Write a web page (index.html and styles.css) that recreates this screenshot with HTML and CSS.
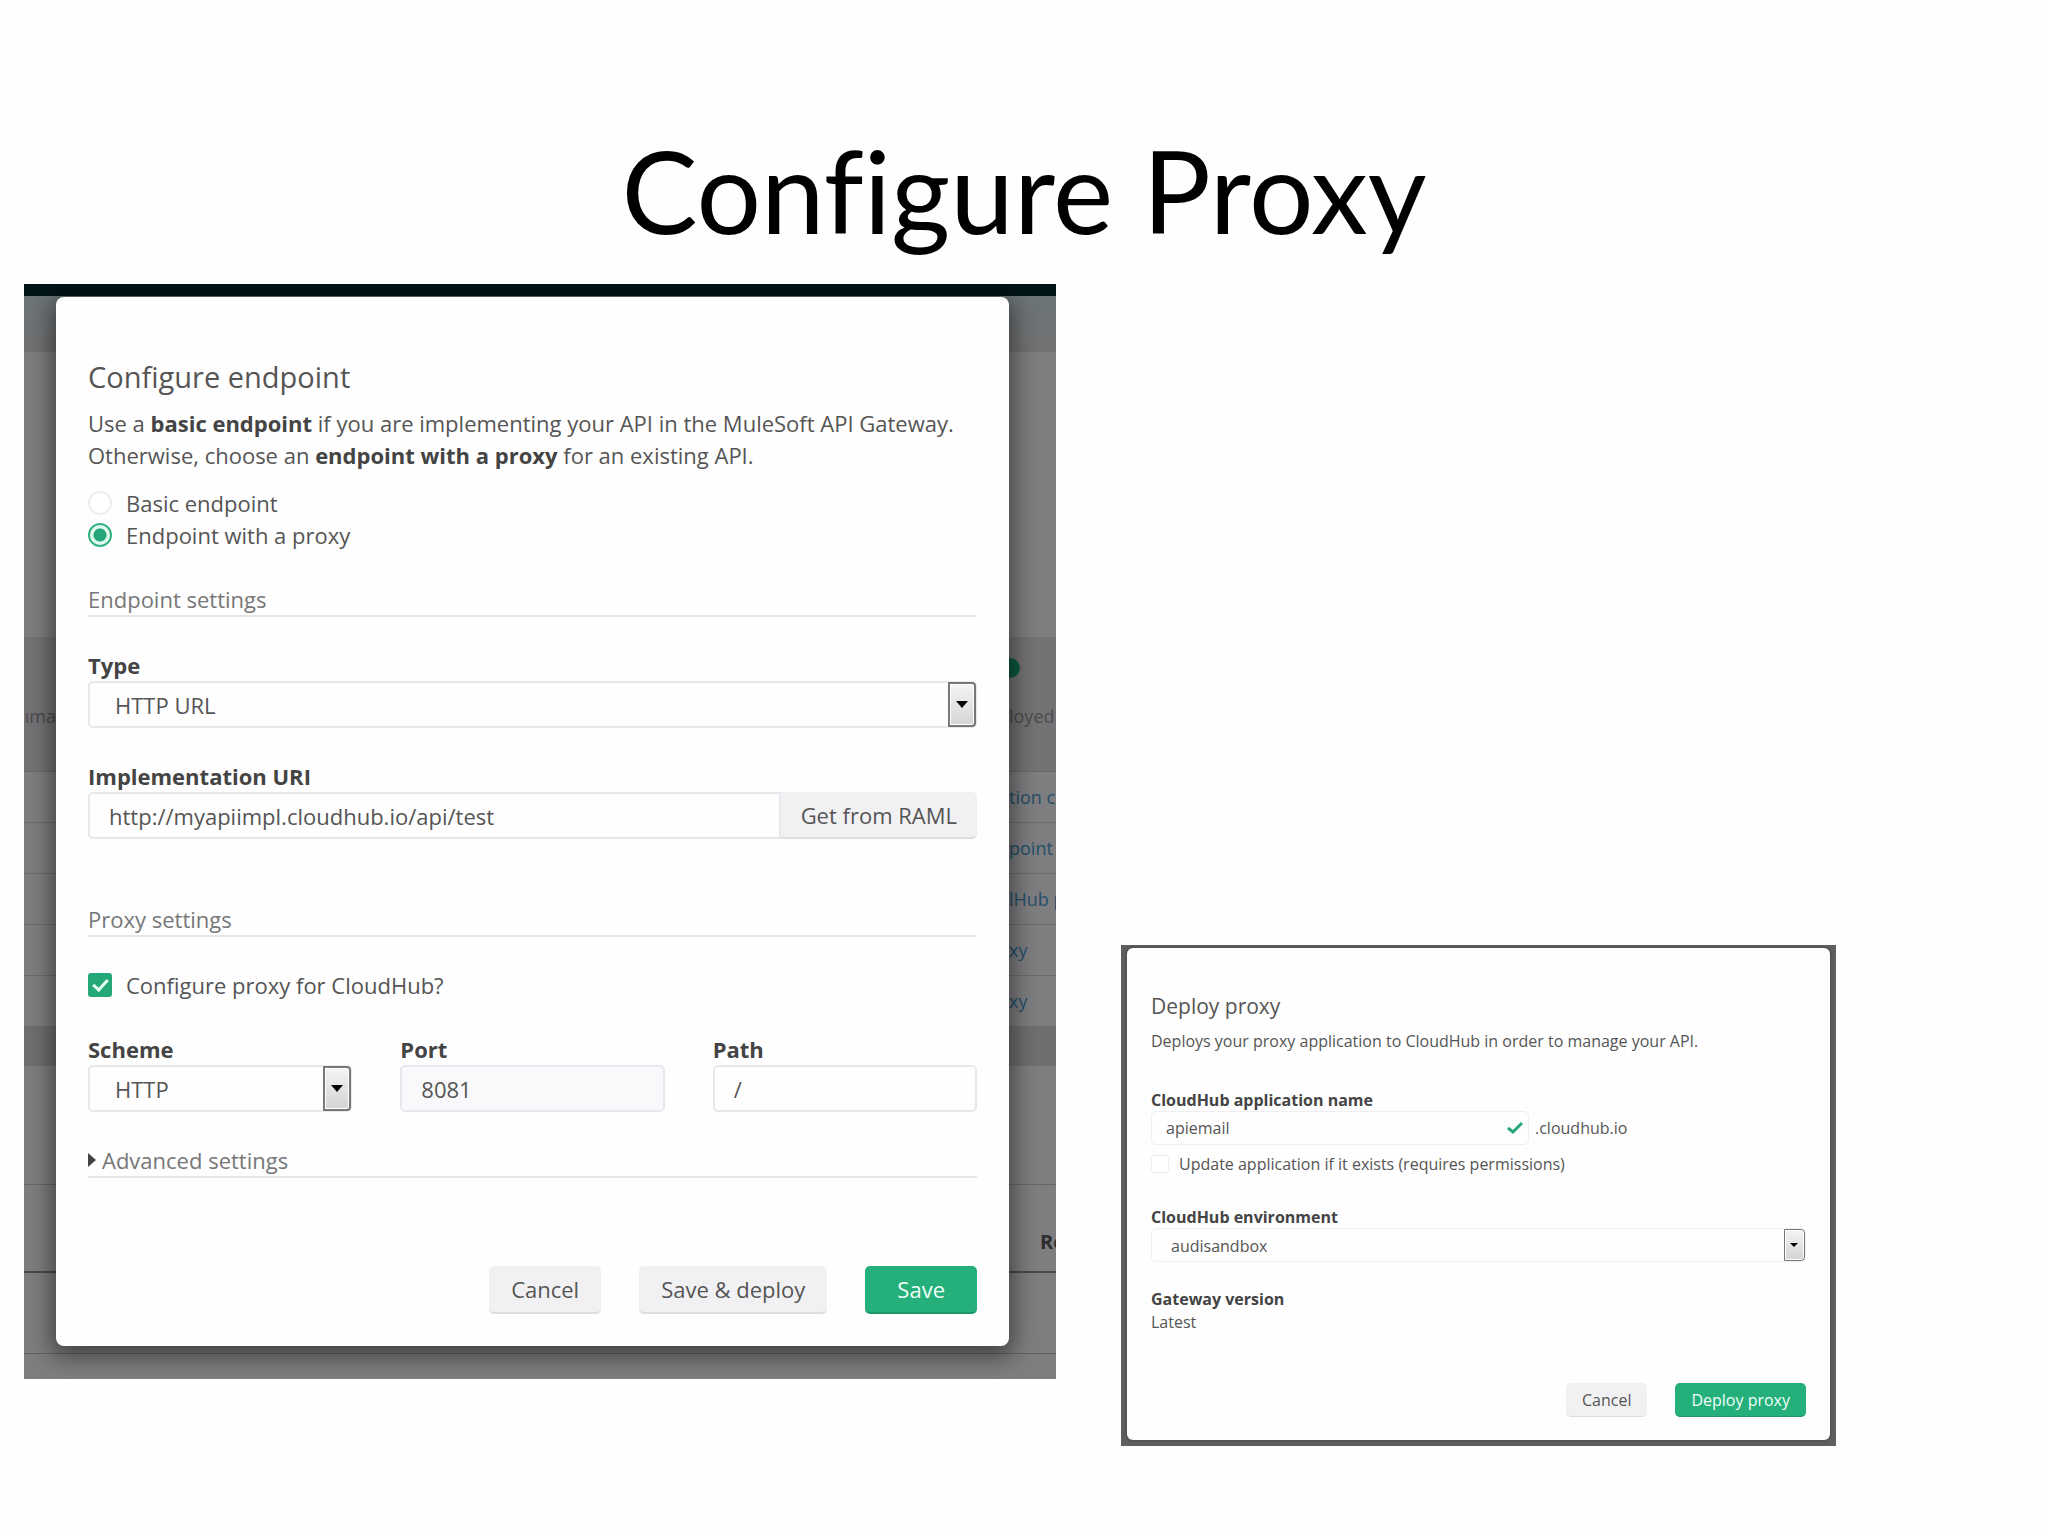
FILE: index.html
```html
<!DOCTYPE html>
<html lang="en">
<head>
  <meta charset="UTF-8">
  <meta name="viewport" content="width=device-width, initial-scale=1.0">
  <title>Configure Proxy</title>
  <link rel="stylesheet" href="styles.css">
</head>
<body>

  <h1 class="slide-title">Configure Proxy</h1>

  <main class="slide">

    <section class="screen">
      <!-- dimmed page behind the dialog -->
      <div class="page" aria-hidden="true">
        <div class="band topbar"></div>
        <div class="band subbar"></div>
        <div class="band blank"></div>
        <div class="band status">
          <span class="cut-left">ıma</span>
          <div class="status-right">
            <i class="dot"></i>
            <span>loyed</span>
          </div>
        </div>
        <div class="band row"><span>tion c</span></div>
        <div class="band row"><span>point</span></div>
        <div class="band row"><span>lHub p</span></div>
        <div class="band row"><span>xy</span></div>
        <div class="band row"><span>xy</span></div>
        <div class="band strip"></div>
        <div class="band gap"></div>
        <div class="band head"><b>Re</b></div>
        <div class="band foot"></div>
        <div class="band rest"></div>
      </div>

      <form class="dialog">
        <h2>Configure endpoint</h2>
        <p>Use a <b>basic endpoint</b> if you are implementing your API in the MuleSoft API Gateway.<br>
          Otherwise, choose an <b>endpoint with a proxy</b> for an existing API.</p>

        <div class="radios">
          <label class="option"><input type="radio" name="endpoint"> Basic endpoint</label>
          <label class="option"><input type="radio" name="endpoint" checked> Endpoint with a proxy</label>
        </div>

        <h3>Endpoint settings</h3>

        <div class="field">
          <label for="type">Type</label>
          <div class="select">
            <select id="type"><option>HTTP URL</option></select>
          </div>
        </div>

        <div class="field">
          <label for="uri">Implementation URI</label>
          <div class="input-group">
            <input type="text" id="uri" value="http://myapiimpl.cloudhub.io/api/test">
            <button type="button" class="addon">Get from RAML</button>
          </div>
        </div>

        <h3 class="proxy-title">Proxy settings</h3>

        <label class="option cloudhub"><input type="checkbox" checked> Configure proxy for CloudHub?</label>

        <div class="columns">
          <div class="field">
            <label for="scheme">Scheme</label>
            <div class="select">
              <select id="scheme"><option>HTTP</option></select>
            </div>
          </div>
          <div class="field">
            <label for="port">Port</label>
            <input type="text" id="port" value="8081" readonly>
          </div>
          <div class="field">
            <label for="path">Path</label>
            <input type="text" id="path" value="/">
          </div>
        </div>

        <h3 class="advanced">
          <svg width="8" height="14" viewBox="0 0 8 14"><path d="M0 0L8 7L0 14Z" fill="#444"/></svg>
          Advanced settings
        </h3>

        <div class="buttons">
          <button type="button">Cancel</button>
          <button type="button">Save &amp; deploy</button>
          <button type="button" class="primary">Save</button>
        </div>
      </form>
    </section>

    <section class="screen small">
      <form class="dialog">
        <h2>Deploy proxy</h2>
        <p>Deploys your proxy application to CloudHub in order to manage your API.</p>

        <div class="field app-field">
          <label for="app">CloudHub application name</label>
          <div class="app-row">
            <div class="app-name">
              <input type="text" id="app" value="apiemail">
              <svg class="tick" width="16" height="12" viewBox="0 0 16 12"><path d="M1 6L6 10L15 1" fill="none" stroke="#27a87a" stroke-width="3"/></svg>
            </div>
            <span>.cloudhub.io</span>
          </div>
        </div>
        <label class="option"><input type="checkbox"> Update application if it exists (requires permissions)</label>

        <div class="field">
          <label for="env">CloudHub environment</label>
          <div class="select">
            <select id="env"><option>audisandbox</option></select>
          </div>
        </div>

        <div class="version">
          <b>Gateway version</b>
          <span>Latest</span>
        </div>

        <div class="buttons">
          <button type="button">Cancel</button>
          <button type="button" class="primary">Deploy proxy</button>
        </div>
      </form>
    </section>

  </main>

</body>
</html>
```
FILE: styles.css
```css
*,
*::before,
*::after {
  box-sizing: border-box;
}

body {
  margin: 0;
  background: #fefefe;
  color: #555;
  font-family: "Open Sans", "Noto Sans", sans-serif;
}

h1, h2, h3, p {
  margin: 0;
  font-weight: normal;
}

.slide-title {
  padding: 120px 0 24px;
  font-family: Lato, sans-serif;
  font-size: 114px;
  font-variant-ligatures: none;
  line-height: 140px;
  text-align: center;
  color: #000;
}

.slide {
  display: grid;
  grid-template-columns: 1032fr 715fr;
  gap: 65px;
  align-items: start;
  padding: 0 212px 0 24px;
}

.screen {
  position: relative;
  overflow: hidden;
  padding: 13px 47px 33px 32px;
  background: #7e7d7f;
}

/* page behind */

.page {
  position: absolute;
  inset: 0;
  display: flex;
  flex-direction: column;
  font-size: 18px;
  line-height: 24px;
  color: #4c4b4d;
}

.band {
  display: flex;
  justify-content: flex-end;
  flex-shrink: 0;
}

.band > span,
.status-right {
  width: 47px;
  overflow: hidden;
  white-space: nowrap;
}

.topbar {
  height: 12px;
  background: #001416;
}

.subbar {
  height: 56px;
  background: linear-gradient(#6d7577, #727173);
}

.blank {
  height: 285px;
}

.status {
  height: 135px;
  justify-content: space-between;
  padding-top: 21px;
  background: #737274;
  border-bottom: 1px solid #6a696b;
}

.status .cut-left {
  display: flex;
  justify-content: flex-end;
  width: 32px;
  padding-top: 46px;
}

.dot {
  display: block;
  width: 20px;
  height: 20px;
  margin: 0 0 26px -9px;
  border-radius: 50%;
  background: #0b5a40;
}

.row {
  height: 51px;
  align-items: center;
  border-bottom: 1px solid #6c6b6d;
  color: #24506a;
}

.strip {
  height: 39px;
  background: #6f6e70;
}

.gap {
  height: 119px;
  border-bottom: 1px solid #68676a;
}

.head {
  height: 88px;
  padding-top: 45px;
  border-bottom: 2px solid #4a494b;
}

.head b {
  width: 16px;
  overflow: hidden;
  font-size: 20px;
  color: #2d2c2e;
}

.foot {
  height: 81px;
  border-bottom: 1px solid #626163;
}

/* dialogs */

.dialog {
  position: relative;
  padding: 60px 32px 32px;
  border-radius: 8px;
  background: #fefefe;
  box-shadow: 0 6px 24px 4px rgba(0, 0, 0, 0.5);
  font-size: 22px;
  line-height: 32px;
}

.dialog b,
.field label {
  font-weight: bold;
  color: #444;
}

h2 {
  margin-bottom: 10px;
  font-size: 29px;
  line-height: 40px;
}

h3 {
  margin: 32px 0;
  border-bottom: 2px solid #e6e6ea;
  font-size: 22px;
  line-height: 32px;
  color: #777;
}

.radios {
  margin-top: 16px;
}

.option {
  display: flex;
  align-items: center;
  gap: 14px;
}

.option input {
  appearance: none;
  width: 24px;
  height: 24px;
  margin: 0;
  border: 2px solid #eee;
  background: #fff;
}

.option input[type="radio"] {
  border-radius: 50%;
}

.option input[type="radio"]:checked {
  border-color: #35b384;
  background: radial-gradient(circle, #26a679 0 6px, #e2faf0 7px);
}

.option input[type="checkbox"] {
  border-radius: 3px;
}

.option input[type="checkbox"]:checked {
  border: none;
  background: #24a878;
}

.option input[type="checkbox"]:checked::after {
  content: "";
  display: block;
  width: 9px;
  height: 15px;
  margin: 3px 0 0 8px;
  border: solid #e6fff5;
  border-width: 0 3px 3px 0;
  transform: rotate(42deg);
}

.field {
  margin-bottom: 32px;
}

.field label {
  display: block;
}

input[type="text"],
select {
  display: block;
  width: 100%;
  height: 47px;
  padding: 0 19px;
  border: 2px solid #e8e8ec;
  border-radius: 5px;
  background: #fefefe;
  color: #555;
  font: inherit;
}

input[readonly] {
  background: #f9f9fb;
}

select {
  appearance: none;
  padding: 0 25px;
}

.select {
  position: relative;
}

/* old style drop-down button */
.select::before {
  content: "";
  position: absolute;
  top: 1px;
  right: 1px;
  bottom: 1px;
  width: 28px;
  border: 2px solid #77777a;
  border-radius: 0 4px 4px 0;
  background: linear-gradient(#f4f4f4, #d4d4d6);
  box-shadow: inset 0 0 0 1px #fff;
  pointer-events: none;
}

.select::after {
  content: "";
  position: absolute;
  top: 20px;
  right: 9px;
  border: 6px solid transparent;
  border-top: 7px solid #000;
  border-bottom: none;
  pointer-events: none;
}

.input-group {
  display: flex;
}

.input-group input {
  flex: 1;
  border-radius: 5px 0 0 5px;
}

button {
  height: 48px;
  padding: 0 22px;
  border: none;
  border-bottom: 2px solid #dddde0;
  border-radius: 5px;
  background: #f1f1f3;
  color: #555;
  font: inherit;
}

.addon {
  height: 47px;
  padding: 0 20px;
  border-radius: 0 5px 5px 0;
}

.proxy-title {
  margin-top: 64px;
}

.columns {
  display: grid;
  grid-template-columns: repeat(3, 1fr);
  gap: 48px;
  margin-top: 32px;
}

.columns .field {
  margin-bottom: 0;
}

.advanced {
  display: flex;
  align-items: center;
  gap: 6px;
}

.buttons {
  display: flex;
  justify-content: flex-end;
  gap: 38px;
  margin-top: 88px;
}

.primary {
  padding: 0 32px;
  border-bottom-color: #1f9868;
  background: #25b07b;
  color: #f0fff8;
}

/* deploy proxy screenshot */

.small {
  margin-top: 661px;
  padding: 3px 6px 6px;
  background: #5f5e60;
}

.small .dialog {
  padding: 44px 24px 23px;
  border-radius: 6px;
  box-shadow: 0 0 4px #444;
  font-size: 16px;
  line-height: 22px;
}

.small h2 {
  font-size: 21px;
  line-height: 28px;
}

.small .field {
  margin-bottom: 26px;
}

.small .app-field {
  margin: 37px 0 8px;
}

.small input[type="text"],
.small select {
  height: 34px;
  padding: 0 14px;
  border: 1px solid #efeff2;
}

.small select {
  padding: 2px 19px 0;
}

.app-row {
  display: flex;
  align-items: center;
  gap: 6px;
}

.app-name {
  position: relative;
  width: 378px;
}

.tick {
  position: absolute;
  top: 11px;
  right: 6px;
}

.small .option {
  gap: 10px;
  margin-bottom: 31px;
}

.small .option input {
  width: 18px;
  height: 18px;
  border-width: 1px;
}

.small .select::before {
  width: 21px;
  border-width: 1px;
}

.small .select::after {
  top: 15px;
  right: 8px;
  border-width: 4px 4px 0;
}

.version {
  display: flex;
  flex-direction: column;
  gap: 1px;
}

.small .buttons {
  gap: 28px;
  margin-top: 50px;
}

.small button {
  height: 34px;
  padding: 0 16px;
  border-width: 0 0 1px;
}
```
